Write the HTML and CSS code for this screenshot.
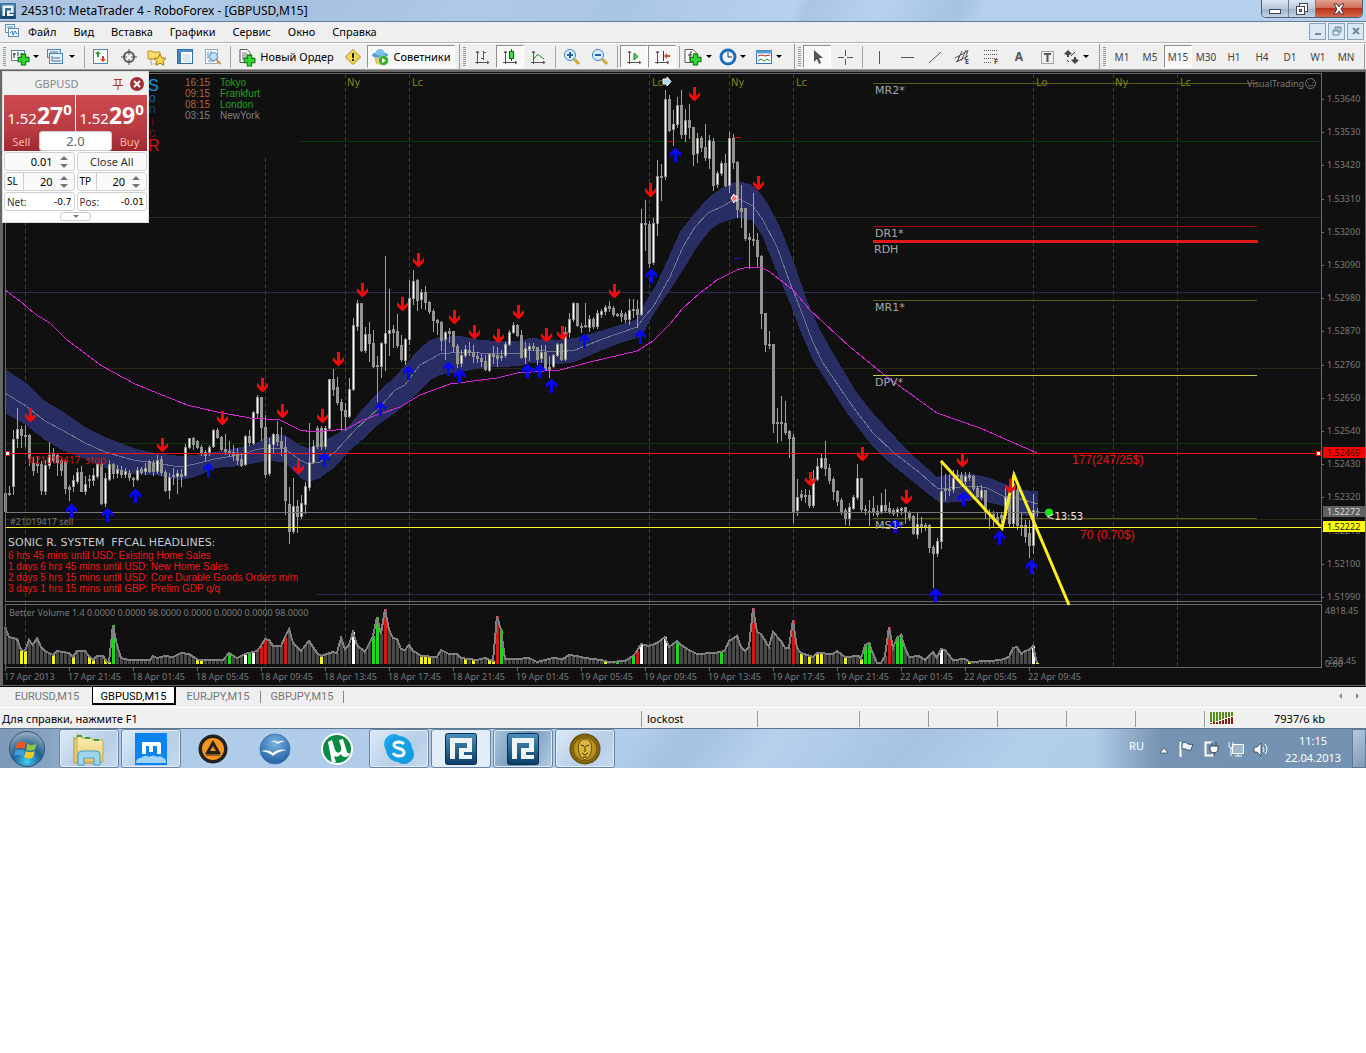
FILE: index.html
```html
<!DOCTYPE html>
<html lang="ru">
<head>
    <meta charset="UTF-8">
    <meta name="viewport" content="width=device-width, initial-scale=1.0">
    <title>245310: MetaTrader 4 - RoboForex - [GBPUSD,M15]</title>
    <link rel="stylesheet" href="styles.css">
</head>
<body>

    <!-- shared icons -->
    <svg class="defs" aria-hidden="true">
        <defs>
            <linearGradient id="gBlue" x1="0" y1="0" x2="0" y2="1"><stop offset="0" stop-color="#4a8fbd"/><stop offset="1" stop-color="#0b3d66"/></linearGradient>
            <radialGradient id="gOrb" cx=".5" cy=".85" r=".8"><stop offset="0" stop-color="#3fd0f5"/><stop offset=".5" stop-color="#1c5f93"/><stop offset="1" stop-color="#8fa9bd"/></radialGradient>
            <radialGradient id="gBird" cx=".5" cy=".3" r=".7"><stop offset="0" stop-color="#7db4e0"/><stop offset="1" stop-color="#1f5fa5"/></radialGradient>
            <radialGradient id="gGold"><stop offset="0" stop-color="#e8c84a"/><stop offset=".7" stop-color="#b08a1a"/><stop offset="1" stop-color="#5f4708"/></radialGradient>
            <linearGradient id="gFold" x1="0" y1="0" x2="0" y2="1"><stop offset="0" stop-color="#fdf3bb"/><stop offset="1" stop-color="#e6c667"/></linearGradient>
            <symbol id="robo" viewBox="0 0 32 32">
                <rect x=".5" y=".5" width="31" height="31" rx="2" fill="url(#gBlue)" stroke="#0a2f52"/>
                <path d="M5 5h22v14h-5v-9H10v16H5z" fill="#eef4f8"/>
                <path d="M14 15h13v4h-8v3h8v4H14z" fill="#eef4f8"/>
            </symbol>
            <symbol id="plus" viewBox="0 0 12 12"><path d="M4 1h4v3h3v4H8v3H4V8H1V4h3z" fill="#35d435" stroke="#0b7a0b"/></symbol>
            <symbol id="axes" viewBox="0 0 18 18"><path d="M4.500 3v13M2 14.500h14M3 5l1.500-2L6 5M14 13l2 1.500-2 1.500" fill="none" stroke="#555"/></symbol>
        </defs>
    </svg>

    <header class="titlebar">
        <svg class="app-icon" viewBox="0 0 32 32"><use href="#robo"/></svg>
        <h1>245310: MetaTrader 4 - RoboForex - [GBPUSD,M15]</h1>
        <div class="win-buttons">
            <button class="win-btn" aria-label="Свернуть"><svg width="14" height="12"><rect x="1.500" y="6.500" width="11" height="4" fill="#fff" stroke="#445"/></svg></button>
            <button class="win-btn" aria-label="Развернуть"><svg width="14" height="12"><rect x="4.500" y=".5" width="8" height="8" fill="#fff" stroke="#445"/><rect x="1.500" y="3.500" width="8" height="8" fill="#fff" stroke="#445"/><rect x="4.500" y="6.500" width="2" height="2" fill="#89a" stroke="#445"/></svg></button>
            <button class="win-btn close" aria-label="Закрыть"><svg width="14" height="12"><path d="M2 1h3l2 3 2-3h3L9 6l3 5H9L7 8l-2 3H2l3-5z" fill="#fff" stroke="#434"/></svg></button>
        </div>
    </header>

    <nav class="menubar">
        <svg width="16" height="16" class="menu-icon"><g fill="#f4f9fd" stroke="#5b8fc0"><rect x="1.500" y="1.500" width="9" height="8"/><rect x="4.500" y="5.500" width="10" height="8"/></g><path d="M6 10l2-2 1 4 2-4 2 3M3 4h6" fill="none" stroke="#3878b8"/></svg>
        <a href="#">Файл</a>
        <a href="#">Вид</a>
        <a href="#">Вставка</a>
        <a href="#">Графики</a>
        <a href="#">Сервис</a>
        <a href="#">Окно</a>
        <a href="#">Справка</a>
        <div class="mdi-buttons">
            <button aria-label="Свернуть окно"><svg width="12" height="12"><path d="M3 9h6" stroke="#6d8ba3" stroke-width="2"/></svg></button>
            <button aria-label="Восстановить окно"><svg width="12" height="12"><path d="M4 4V2h6v5H8M2 5h6v5H2zM2 6h6M4 3h6" fill="none" stroke="#6d8ba3"/></svg></button>
            <button aria-label="Закрыть окно"><svg width="12" height="12"><path d="M3 3l6 6M9 3l-6 6" stroke="#6d8ba3" stroke-width="2"/></svg></button>
        </div>
    </nav>

    <div class="toolbar">
        <div class="group">
            <button class="tool drop" aria-label="Новый график"><svg width="20" height="18"><rect x="1.500" y="2.500" width="13" height="10" fill="#f4f9fd" stroke="#4f86b8"/><path d="M4 5v5M3 6h3M8 4v4M10 6h3" stroke="#333" stroke-width="1"/><use href="#plus" x="7" y="5" width="13" height="13"/></svg></button>
            <button class="tool drop" aria-label="Профили"><svg width="20" height="18"><g fill="#e6f1fa" stroke="#4f86b8"><rect x="1.500" y="1.500" width="13" height="8"/><rect x="3.500" y="5.500" width="13" height="10"/></g><path d="M4 4h8M6 8v5h9M7 10h7" fill="none" stroke="#4f6f90"/></svg></button>
            <span class="sep"></span>
            <button class="tool" aria-label="Обзор рынка"><svg width="18" height="18"><rect x="1.500" y="1.500" width="14" height="14" fill="#fff" stroke="#4f86b8"/><path d="M6 3l3 3H7v3H5V6H3z" fill="#2a9d2a"/><path d="M11 14l-3-3h2V8h2v3h2z" fill="#e04020"/></svg></button>
            <button class="tool" aria-label="Окно данных"><svg width="18" height="18"><circle cx="9" cy="9" r="5" fill="none" stroke="#555" stroke-width="2"/><path d="M9 1v6M9 11v6M1 9h6M11 9h6" stroke="#555"/></svg></button>
            <button class="tool" aria-label="Навигатор"><svg width="20" height="18"><path d="M1 3h4l1 1h7v7H1z" fill="#f8dc6a" stroke="#b8902a"/><path d="M4 10v6h5" fill="none" stroke="#777" stroke-dasharray="1 1"/><path d="M13 6l2 4 4 .4-3 2.800.8 4-3.800-2-3.800 2 .8-4-3-2.800 4-.4z" fill="#ffd84a" stroke="#a87a10"/></svg></button>
            <button class="tool" aria-label="Терминал"><svg width="18" height="18"><rect x="1.500" y="1.500" width="15" height="14" fill="#fff" stroke="#2f6fae"/><path d="M2 3h14" stroke="#4f90cc" stroke-width="2"/><path d="M2 4h3v11H2z" fill="#3d82c4"/><path d="M7 7h8M7 9h8M7 11h8M7 13h8" stroke="#b9d2e8"/></svg></button>
            <button class="tool" aria-label="Тестер стратегий"><svg width="18" height="18"><rect x="1.500" y="1.500" width="12" height="14" fill="#f4f9fd" stroke="#9ab"/><path d="M4 4v7M7 3v8M10 5v5M4 13h7" stroke="#68a"/><circle cx="9.500" cy="8.500" r="4" fill="#bfe0f7" fill-opacity=".8" stroke="#5590bd"/><path d="M12.500 12l4 4" stroke="#c9953a" stroke-width="2"/></svg></button>
            <span class="sep"></span>
            <button class="tool order"><svg width="18" height="20"><path d="M2 2.500h7l3 3v10H2z" fill="#fff" stroke="#555"/><path d="M4 6h5M4 8h6M4 10h6M4 12h3" stroke="#777"/><use href="#plus" x="5" y="7" width="13" height="13"/></svg>Новый Ордер</button>
            <button class="tool" aria-label="Редактор"><svg width="18" height="18"><path d="M9 1.500L16.500 9 9 16.500 1.500 9z" fill="#f7d64a" stroke="#a8842a"/><path d="M9 5v5M9 11v2" stroke="#222" stroke-width="2"/></svg></button>
            <button class="tool experts pressed"><svg width="18" height="18"><path d="M3 8q6 5 12 0l1 5-5 4-6-1z" fill="#e8c25a"/><ellipse cx="9" cy="7" rx="8" ry="3" fill="#4a9fd4"/><path d="M4 6q1-5 5-5t5 5q-5 3-10 0z" fill="#7cc1ea"/><circle cx="12.500" cy="12.500" r="5" fill="#2fae2f" stroke="#fff" stroke-width=".5"/><path d="M11 10l4 2.500-4 2.500z" fill="#fff"/></svg>Советники</button>
        </div>
        <div class="group">
            <button class="tool" aria-label="Бары"><svg width="18" height="18"><use href="#axes"/><path d="M10.500 3v9M8 10.500h2M11 4.500h2" stroke="#178a17"/></svg></button>
            <button class="tool pressed" aria-label="Свечи"><svg width="18" height="18"><use href="#axes"/><path d="M10.500 1v12" stroke="#0d6b0d"/><rect x="8.500" y="3.500" width="4" height="7" fill="#3ee03e" stroke="#0d6b0d"/></svg></button>
            <button class="tool" aria-label="Линия"><svg width="18" height="18"><use href="#axes"/><path d="M4 12l4-5q2-1 3 1l4 3" fill="none" stroke="#178a17"/></svg></button>
            <span class="sep"></span>
            <button class="tool" aria-label="Увеличить"><svg width="18" height="18"><path d="M11 11l5 5" stroke="#d4a63a" stroke-width="3"/><circle cx="7" cy="7" r="5.500" fill="#d9eefc" stroke="#3a83c8" stroke-width="1"/><path d="M4 7h6M7 4v6" stroke="#2563a8" stroke-width="2"/></svg></button>
            <button class="tool" aria-label="Уменьшить"><svg width="18" height="18"><path d="M11 11l5 5" stroke="#d4a63a" stroke-width="3"/><circle cx="7" cy="7" r="5.500" fill="#d9eefc" stroke="#3a83c8" stroke-width="1"/><path d="M4 7h6" stroke="#2563a8" stroke-width="2"/></svg></button>
            <span class="sep"></span>
            <button class="tool pressed" aria-label="Автопрокрутка"><svg width="18" height="18"><use href="#axes"/><path d="M9 5l4 3.500L9 12z" fill="#5ad65a" stroke="#178a17"/></svg></button>
            <button class="tool pressed" aria-label="Сдвиг графика"><svg width="18" height="18"><use href="#axes"/><path d="M10.500 3v10" stroke="#333"/><path d="M11 8l3-3v2h3v2h-3v2z" fill="#d4502a"/></svg></button>
            <span class="sep"></span>
            <button class="tool drop" aria-label="Индикаторы"><svg width="20" height="18"><path d="M2 1.500h8l3 3v10H2z" fill="#fff" stroke="#555"/><path d="M9 4q-2-1-2 2v6M5 7h4" fill="none" stroke="#333"/><use href="#plus" x="6" y="5" width="13" height="13"/></svg></button>
            <button class="tool drop" aria-label="Периоды"><svg width="18" height="18"><circle cx="9" cy="9" r="7" fill="#eaf5fd" stroke="#1f6cb8" stroke-width="3"/><path d="M9 4v5h4" fill="none" stroke="#333"/></svg></button>
            <button class="tool drop" aria-label="Шаблоны"><svg width="18" height="18"><rect x="1.500" y="2.500" width="15" height="13" fill="#fff" stroke="#3577b5"/><path d="M1 4h16" stroke="#5d9bd6" stroke-width="3"/><path d="M3 8l4-1 3 1 5-1" fill="none" stroke="#b02020"/><path d="M3 13l3-2 3 2 3-2 3 2" fill="none" stroke="#178a4a"/></svg></button>
        </div>
        <div class="group">
            <button class="tool pressed" aria-label="Курсор"><svg width="18" height="18"><path d="M6 2v12l3-3 2 5 2-1-2-5h4z" fill="#555"/></svg></button>
            <button class="tool" aria-label="Перекрестие"><svg width="18" height="18"><path d="M9.500 2v6M9.500 11v6M2 9.500h6M11 9.500h6" stroke="#555"/></svg></button>
            <span class="sep"></span>
            <button class="tool" aria-label="Вертикальная линия"><svg width="18" height="18"><path d="M9.500 3v13" stroke="#555"/></svg></button>
            <button class="tool" aria-label="Горизонтальная линия"><svg width="18" height="18"><path d="M3 9.500h13" stroke="#555"/></svg></button>
            <button class="tool" aria-label="Трендовая линия"><svg width="18" height="18"><path d="M3 15L15 4" stroke="#555"/></svg></button>
            <button class="tool" aria-label="Канал"><svg width="18" height="20"><path d="M1 11L14 4M2 15l12-6M3 15L8 4M7 14l5-11M5 9l-1 6M11 13l3-10" stroke="#555"/><text x="11" y="17" class="mini">E</text></svg></button>
            <button class="tool" aria-label="Фибоначчи"><svg width="18" height="20"><path d="M2 3.500h14M2 7.500h14M2 11.500h14M2 15.500h8" stroke="#555" stroke-dasharray="1 1"/><text x="12" y="17" class="mini">F</text></svg></button>
            <button class="tool letter">A</button>
            <button class="tool" aria-label="Метка"><svg width="18" height="18"><rect x="3.500" y="3.500" width="12" height="12" fill="none" stroke="#555" stroke-dasharray="1 1"/><path d="M6 6h7M9.500 6v8" stroke="#555" stroke-width="2"/></svg></button>
            <button class="tool drop" aria-label="Стрелки"><svg width="18" height="18"><path d="M6 2l4 4-3 1v2H5V7L2 6zM13 16l-4-4 3-1V9h2v2l3 1z" fill="#444"/><path d="M5 12l2 2M9 8l4-4" fill="none" stroke="#444" stroke-width="1"/></svg></button>
        </div>
        <div class="group periods">
            <button class="tool">M1</button>
            <button class="tool">M5</button>
            <button class="tool pressed">M15</button>
            <button class="tool">M30</button>
            <button class="tool">H1</button>
            <button class="tool">H4</button>
            <button class="tool">D1</button>
            <button class="tool">W1</button>
            <button class="tool">MN</button>
        </div>
    </div>

    <main class="chart-window">
        <svg class="chart" viewBox="0 70 1366 616" role="img" aria-label="GBPUSD, M15">
            <rect x="3" y="72" width="1362" height="613" fill="#101010"/>
            <g id="levels" shape-rendering="crispEdges">
                <path d="M299 141.500H1321M5 443.500H1321" stroke="#0a3a0a"/>
                <path d="M5 217.500H1321M5 368.500H1321M5 519.500H1321" stroke="#2c2a1a"/>
                <path d="M5 292.500H1321M316 594.500H1321" stroke="#2a2a52"/>
                <path d="M873 83.500H1257M873 300.500H1257M873 518.500H1257" stroke="#5c5c14"/>
                <path d="M25.500 222V667M265.500 158V667M345.500 74V667M409.500 74V667M649.500 74V667M729.500 74V667M793.500 74V667M1033.500 74V667M1113.500 74V667M1177.500 74V667" stroke="#46460c" stroke-dasharray="4 3"/>
            </g>
            <g id="series" shape-rendering="crispEdges"></g>
            <g shape-rendering="crispEdges" fill="none">
                <path d="M873 226.500H1257" stroke="#a00c0c"/>
                <path d="M873 241.500H1258" stroke="#e01818" stroke-width="3"/>
                <path d="M873 375.500H1257" stroke="#c8c83c"/>
                <path d="M5 453.500H1321" stroke="#f01010"/>
                <path d="M5 512.500H1048" stroke="#777"/>
                <path d="M5 527.500H1321" stroke="#ffff30"/>
                <path d="M668 141.500h7M734 137.500h7" stroke="#c01010"/>
                <path d="M734 258.500h7" stroke="#1010c0"/>
                <path d="M5.500 73.500H1321.500V601.500H5.500zM5.500 604.500H1321.500V667.500H5.500z" stroke="#6a6a6a"/>
            </g>
            <rect x="5.500" y="451.500" width="4" height="4" fill="#fff" stroke="#e01010"/>
            <rect x="1316.500" y="451.500" width="4" height="4" fill="#fff" stroke="#e01010"/>
            <path d="M941 461L1002 528L1014 475L1069 605" fill="none" stroke="#ffee1c" stroke-width="3"/>
            <path d="M663 79h4v-2l4 4.500-4 4.500v-2h-4z" fill="#a8d8f0" stroke="#fff"/>
            <path d="M731 198l3-4v2h3v5h-3v2z" fill="#f07070" stroke="#fff"/>
            <circle cx="1049" cy="512.500" r="4" fill="#18e018"/>
            <g id="arrows"></g>

            <g class="session">
                <text x="347" y="86">Ny</text><text x="412" y="86">Lc</text><text x="652" y="86">Lo</text>
                <text x="731" y="86">Ny</text><text x="796" y="86">Lc</text><text x="1036" y="86">Lo</text>
                <text x="1115" y="86">Ny</text><text x="1180" y="86">Lc</text>
            </g>
            <g class="pivot">
                <text x="875" y="94">MR2*</text><text x="875" y="237">DR1*</text><text x="874" y="253">RDH</text>
                <text x="875" y="311">MR1*</text><text x="875" y="386">DPV*</text><text x="875" y="529">MS1*</text>
            </g>
            <g class="clock">
                <text x="185" y="86" fill="#a8683a">16:15</text><text x="220" y="86" fill="#22a022">Tokyo</text>
                <text x="185" y="97" fill="#a8683a">09:15</text><text x="220" y="97" fill="#22a022">Frankfurt</text>
                <text x="185" y="108" fill="#a8683a">08:15</text><text x="220" y="108" fill="#22a022">London</text>
                <text x="185" y="119" fill="#808080">03:15</text><text x="220" y="119" fill="#808080">NewYork</text>
            </g>
            <g class="sonic">
                <text x="148" y="91" class="big" fill="#1296e8">S</text>
                <text x="149" y="102" fill="#0c6cb0">o</text>
                <text x="149" y="113" fill="#0a4a7c">n</text>
                <text x="151" y="126" fill="#6e0c0c">i</text>
                <text x="149" y="137" fill="#8a0e0e">c</text>
                <text x="148" y="151" class="big" fill="#d01414">R</text>
            </g>
            <text x="28" y="464" class="order-red">#21019417 &#160;stop</text>
            <text x="10" y="525" class="dim">#21019417 sell</text>
            <text x="8" y="546" class="news-head">SONIC R. SYSTEM &#160;FFCAL HEADLINES:</text>
            <g class="news">
                <text x="8" y="559">6 hrs 45 mins until USD: Existing Home Sales</text>
                <text x="8" y="570">1 days 6 hrs 45 mins until USD: New Home Sales</text>
                <text x="8" y="581">2 days 5 hrs 15 mins until USD: Core Durable Goods Orders m/m</text>
                <text x="8" y="592">3 days 1 hrs 15 mins until GBP: Prelim GDP q/q</text>
            </g>
            <text x="1072" y="464" class="profit">177(247/25$)</text>
            <text x="1080" y="539" class="profit">70 (0.70$)</text>
            <text x="1046" y="520" class="timer">&lt;13:53</text>
            <text x="1247" y="87" class="dim brand">VisualTrading</text>
            <g fill="none" stroke="#777"><circle cx="1310.500" cy="83.500" r="5"/><path d="M1308 82v1M1313 82v1M1308 85q2.500 2.500 5 0"/></g>
            <text x="9" y="616" class="dim">Better Volume 1.4 0.0000 0.0000 98.0000 0.0000 0.0000 0.0000 98.0000</text>

            <g id="scale" class="dim"></g>
            <g class="dim">
                <text x="1325" y="614">4818.45</text>
                <text x="1325" y="664">-228.45</text>
                <text x="1325" y="667">0.00</text>
            </g>
            <g class="tags">
                <rect x="1323" y="447" width="42" height="11" fill="#f00"/><text x="1327" y="456" fill="#300">1.52469</text>
                <rect x="1323" y="506" width="42" height="11" fill="#606060"/><text x="1327" y="515" fill="#ddd">1.52272</text>
                <rect x="1323" y="521" width="42" height="11" fill="#ff0"/><text x="1327" y="530" fill="#222">1.52222</text>
            </g>
        </svg>

        <form class="trade-panel">
            <div class="tp-head">
                <span>GBPUSD</span>
                <button type="button" aria-label="Закрепить"><svg width="12" height="12"><path d="M2 1.500h8M4 2v5M8 2v5M1 7.500h10M6 8v4" fill="none" stroke="#a33" stroke-width="1"/></svg></button>
                <button type="button" aria-label="Закрыть панель"><svg width="16" height="16"><circle cx="8" cy="8" r="7" fill="#a03036"/><path d="M5 5l6 6M11 5l-6 6" stroke="#fff" stroke-width="2"/></svg></button>
            </div>
            <div class="tp-prices">
                <div class="price">1.52<b>27</b><sup>0</sup></div>
                <div class="price">1.52<b>29</b><sup>0</sup></div>
            </div>
            <div class="tp-deal">
                <button type="button">Sell</button>
                <input type="text" value="2.0" aria-label="Spread">
                <button type="button">Buy</button>
            </div>
            <div class="tp-grid">
                <div class="cell"><input type="text" value="0.01" aria-label="Lots"><i class="spin"></i></div>
                <button type="button" class="cell">Close All</button>
                <div class="cell"><label for="sl">SL</label><input type="text" id="sl" value="20"><i class="spin"></i></div>
                <div class="cell"><label for="tp">TP</label><input type="text" id="tp" value="20"><i class="spin"></i></div>
                <div class="cell wide"><span>Net:</span><output>-0.7</output></div>
                <div class="cell wide"><span>Pos:</span><output>-0.01</output></div>
            </div>
            <button type="button" class="tp-more" aria-label="Ещё"></button>
        </form>
    </main>

    <div class="tabs">
        <a href="#">EURUSD,M15</a>
        <a href="#" class="active">GBPUSD,M15</a>
        <a href="#">EURJPY,M15</a>
        <a href="#" class="ruled">GBPJPY,M15</a>
        <span class="tab-scroll"><svg width="28" height="10"><path d="M7 2v6L4 5zM21 2v6l3-3z" fill="#888"/></svg></span>
    </div>

    <footer class="statusbar">
        <span class="hint">Для справки, нажмите F1</span>
        <span class="s-user">lockost</span>
        <span class="s-wide"></span>
        <span></span>
        <span></span>
        <span></span>
        <span></span>
        <span></span>
        <span class="s-net">
            <svg width="24" height="14" shape-rendering="crispEdges"><path d="M1 1v10M4 1v10M7 1v9M10 1v8M13 1v7M16 1v6M19 1v5M22 1v4" stroke="#5a8a1a" stroke-width="2"/><path d="M1 12v1M4 11v2M7 11v2M10 10v3M13 9v4M16 8v5M19 7v6M22 6v7" stroke="#8a2010" stroke-width="2"/></svg>
            7937/6 kb
        </span>
    </footer>

    <div class="taskbar">
        <button class="start" aria-label="Пуск"><svg width="38" height="38"><circle cx="19" cy="19" r="17.500" fill="url(#gOrb)" stroke="#34546e"/><path d="M9 13q5-3 9 0l-1.500 6q-4-2-9 0z" fill="#e8562a"/><path d="M19.500 13.500q4 3 9 0l-1.500 6q-5 2.500-9 0z" fill="#8cc63e"/><path d="M7.300 20.500q5-2 9 0L15 26.500q-4-3-9-.5z" fill="#3fa0e0"/><path d="M17.800 21q4 2.500 9 0l-1.500 6q-5 3-9 0z" fill="#fcc82a"/></svg></button>
        <button class="task open" aria-label="Проводник"><svg width="36" height="34"><path d="M3 6h10l2 3h14v22H3z" fill="#e9d07a" stroke="#b5953a"/><path d="M6 3h4l1 3h10l1 2h10v22H6z" fill="url(#gFold)" stroke="#c9a94f"/><path d="M6 4h5M14 6h5M23 8h5" stroke="#3c9a4a" stroke-width="2"/><path d="M7 33V23q0-4 4-4h14q4 0 4 4v10h-6v-7H13v7z" fill="#9ed5ee" stroke="#4c9cc4"/></svg></button>
        <button class="task open" aria-label="Maxthon"><svg width="32" height="32"><rect width="32" height="32" fill="#0a84f0"/><path d="M1 30q0-5 5-5 4-4 8-1 4-3 8 0 4-2 6 1 3 0 3 5z" fill="#9fd3fa"/><path d="M7 21V9h17q2 0 2 2v10h-4v-8h-4v6h-4v-6h-3v8z" fill="#fff"/></svg></button>
        <button class="task" aria-label="AIMP"><svg width="32" height="32"><circle cx="16" cy="16" r="14.500" fill="#222"/><circle cx="16" cy="16" r="11" fill="#f7941d"/><path d="M16 7l8 14H8zM16 13l-3 5h6z" fill="#222" fill-rule="evenodd"/><path d="M9 22h14" stroke="#222" stroke-width="1"/></svg></button>
        <button class="task" aria-label="OpenOffice"><svg width="32" height="32"><circle cx="16" cy="16" r="15" fill="url(#gBird)" stroke="#3c78b4"/><path d="M12 8q4-1 7 1 3-2 7-1-5 1-7 3-2-2-7-3zM2 18q8-2 12 2 5-5 14-3-9 1-14 6-4-4-12-5z" fill="#fff"/></svg></button>
        <button class="task" aria-label="uTorrent"><svg width="32" height="32"><circle cx="16" cy="16" r="15" fill="#0b8a43" stroke="#fff" stroke-width="2"/><path d="M7 9l4-2 3 10q2 4 5 2 2-2 1-5l-2-7 4-1 4 13q1 2 3 1-1 4-5 4-3 0-4-3-3 4-7 2l2 6-4 1z" fill="#fff"/></svg></button>
        <button class="task open" aria-label="Skype"><svg width="32" height="32"><circle cx="11" cy="11" r="10" fill="#1ba7e8"/><circle cx="21" cy="21" r="10" fill="#0f9ade"/><circle cx="16" cy="16" r="13" fill="#14a0e6"/><path d="M21 11q-2-2-5-2-5 0-5 3 0 2 5 3.500 5 1 5 4 0 3.500-5 3.500-4 0-6-3" fill="none" stroke="#fff" stroke-width="3"/></svg></button>
        <button class="task open light" aria-label="MetaTrader"><svg width="32" height="32"><use href="#robo"/></svg></button>
        <button class="task open current" aria-label="MetaTrader GBPUSD"><svg width="32" height="32"><use href="#robo"/></svg></button>
        <button class="task open" aria-label="Lion"><svg width="32" height="32"><circle cx="16" cy="16" r="15.500" fill="url(#gGold)"/><circle cx="16" cy="16" r="12" fill="none" stroke="#705008"/><path d="M11 8q5-4 10 0 4 8-1 16l-4 3-4-3Q7 16 11 8z" fill="#d8b440" stroke="#6b4d0a"/><path d="M12 12l3 1M20 12l-3 1M16 13v6M13 20l3 2 3-2M14 24h4" fill="none" stroke="#4a3404" stroke-width="1"/></svg></button>

        <div class="tray">
            <span class="lang">RU</span>
            <svg width="12" height="20"><path d="M2 14l4-5 4 5z" fill="#fff" stroke="#567"/></svg>
            <svg width="18" height="20"><path d="M3.500 3v15" stroke="#fff" stroke-width="2"/><path d="M5 4q4-2 6 1 3 1 5 0l-2 6q-4 1-5-1H5z" fill="#eef" stroke="#456"/></svg>
            <svg width="18" height="20"><path d="M11 3.500H3.500v13h8M11 16.500v-2" fill="none" stroke="#fff" stroke-width="2"/><path d="M8 7h8v4q-1 3-4 3t-4-3zM10 3v4M14 3v4M12 13v4" fill="#fff" stroke="#345"/></svg>
            <svg width="18" height="20"><rect x="5.500" y="5.500" width="11" height="9" fill="#9fb6cc" stroke="#fff"/><path d="M8 17h7M11 15v2M2 3v4q0 2 2 2v8M6 3v4q0 2-2 2" fill="none" stroke="#fff" stroke-width="1"/></svg>
            <svg width="18" height="20"><path d="M2 8h3l4-4v13l-4-4H2z" fill="#fff" stroke="#456"/><path d="M11 8q2 2.500 0 5M13 5q4 5 0 10" fill="none" stroke="#fff"/></svg>
            <time class="clock-box">11:15<br>22.04.2013</time>
            <button class="peek" aria-label="Показать рабочий стол"></button>
        </div>
    </div>

    <script src="script.js"></script>
</body>
</html>
```

FILE: styles.css
```css
* {
    box-sizing: border-box;
}
body {
    margin: 0;
    background: #fff;
    color: #000;
    font-family: "Noto Sans", "Open Sans", sans-serif;
    font-size: 11px;
}
a {
    color: inherit;
    text-decoration: none;
}
button, input {
    font: inherit;
    color: inherit;
    margin: 0;
    padding: 0;
    border: 0;
    background: none;
}
.defs {
    position: absolute;
    width: 0;
    height: 0;
}

/* title bar */
.titlebar {
    display: flex;
    align-items: center;
    height: 22px;
    padding-right: 3px;
    border-bottom: 1px solid #5f7d9c;
    background: linear-gradient(115deg, #a8c0dc 0, #b4cfea 14%, #a4c0de 20%, #adc9e6 34%, #a9c6e4 46%, #b6d2ee 58%, #a9c5e3 59%, #b6d2ee 64%, #a5c3e1 70%, #b5d1ee 72%, #b5d1ee 100%);
}
.app-icon {
    width: 16px;
    height: 16px;
}
.titlebar h1 {
    flex: 1;
    margin: 0 0 0 5px;
    font-size: 12px;
    line-height: 20px;
    font-weight: normal;
}
.win-buttons {
    display: flex;
    align-self: flex-start;
    border: 1px solid #4e5f73;
    border-top: 0;
    border-radius: 0 0 5px 5px;
    overflow: hidden;
}
.win-btn {
    display: flex;
    align-items: center;
    justify-content: center;
    width: 27px;
    height: 17px;
    border-right: 1px solid #6f7f92;
    background: linear-gradient(#dbe6f2, #b9c9dc 50%, #9fb4cc 51%, #c0d3e6);
}
.win-btn.close {
    width: 46px;
    border-right: 0;
    background: linear-gradient(#e4a090, #d06a54 48%, #b8301a 50%, #d4694a);
}

/* menu */
.menubar {
    display: flex;
    align-items: center;
    gap: 17px;
    height: 21px;
    padding: 0 2px 2px 4px;
    background: #efefef;
    border-bottom: 1px solid #b4b4b4;
}
.menu-icon {
    margin-right: -9px;
}
.mdi-buttons {
    display: flex;
    gap: 2px;
    margin-left: auto;
}
.mdi-buttons button {
    display: flex;
    align-items: center;
    justify-content: center;
    width: 17px;
    height: 17px;
    border: 1px solid #8ba3b8;
    background: #dbe8f3;
}

/* toolbar */
.toolbar {
    display: flex;
    height: 27px;
    background: #efefef;
    border-top: 1px solid #fff;
    border-bottom: 1px solid #999;
}
.group {
    display: flex;
    align-items: center;
    padding: 0 4px 0 8px;
    border-right: 1px solid #999;
}
.group::before {
    content: "";
    align-self: center;
    width: 3px;
    height: 19px;
    margin: 0 2px 0 -5px;
    background: repeating-linear-gradient(#999 0 1px, transparent 1px 2px);
}
.group:first-child::before {
    margin-right: 3px;
}
.group:nth-child(3) {
    padding-right: 2px;
}
.sep {
    width: 1px;
    height: 22px;
    margin: 0 2px 0 3px;
    background: #a5a5a5;
}
.tool {
    display: flex;
    align-items: center;
    justify-content: center;
    width: 28px;
    height: 23px;
    border: 1px solid transparent;
}
.tool.pressed {
    background: #f8f8f8;
    border-color: #8f8f8f #fff #fff #8f8f8f;
}
.tool.drop {
    width: 36px;
    justify-content: flex-start;
    gap: 3px;
}
.tool.drop::after {
    content: "";
    border: 3px solid transparent;
    border-top: 3px solid #000;
    border-bottom: 0;
}
.tool.order {
    width: 106px;
    gap: 4px;
}
.tool.experts {
    width: 88px;
    gap: 4px;
}
.tool.letter {
    font-size: 12px;
    font-weight: bold;
    color: #555;
}
.mini {
    font: bold 7px "Noto Sans", sans-serif;
    fill: #444;
}
.periods {
    font-size: 10px;
    color: #444;
}

/* chart */
.chart-window {
    position: relative;
    background: #666;
}
.chart {
    display: block;
    width: 100%;
    height: auto;
}
.chart text {
    font-family: "Noto Sans", "Open Sans", sans-serif;
    font-size: 9px;
}
.chart .session text {
    font-family: "DejaVu Sans", sans-serif;
    font-size: 10px;
    fill: #80801a;
}
.chart .pivot text {
    font-family: "DejaVu Sans", sans-serif;
    font-size: 11px;
    fill: #a8a8a8;
}
.chart .clock text,
.chart .news text {
    font-family: "Liberation Sans", Arial, sans-serif;
    font-size: 10px;
}
.chart .news text {
    fill: #f01414;
}
.chart .news-head {
    font-family: "DejaVu Sans", sans-serif;
    font-size: 11px;
    fill: #c8c8c8;
}
.chart .sonic text {
    font-family: "Liberation Sans", Arial, sans-serif;
    font-size: 12px;
}
.chart .sonic .big {
    font-size: 16px;
}
.chart .dim {
    fill: #7a7a7a;
}
.chart .order-red {
    font-size: 10px;
    fill: #d01414;
}
.chart .profit {
    font-family: "Liberation Sans", Arial, sans-serif;
    font-size: 12px;
    fill: #e01414;
}
.chart .timer {
    font-family: "DejaVu Sans", sans-serif;
    font-size: 10px;
    fill: #e8e8e8;
}

/* one click trading panel */
.trade-panel {
    position: absolute;
    left: 2px;
    top: 1px;
    width: 147px;
    padding: 0 1px;
    background: #fff;
    border: 1px solid #ddd;
    color: #333;
}
.tp-head {
    display: flex;
    align-items: center;
    gap: 5px;
    height: 23px;
    margin: 0 -1px;
    padding-right: 3px;
    background: #f0f0f0;
    color: #888;
}
.tp-head span {
    flex: 1;
    padding-left: 3px;
    text-align: center;
}
.tp-head button {
    display: flex;
}
.tp-prices {
    display: grid;
    grid-template-columns: 1fr 1fr;
    gap: 1px;
}
.price {
    height: 36px;
    background: linear-gradient(#cf4a50, #b83a42);
    color: #fff;
    font-size: 15px;
    line-height: 40px;
    text-align: center;
    white-space: nowrap;
    overflow: hidden;
}
.price b {
    font-size: 23px;
}
.price sup {
    font-size: 15px;
    font-weight: bold;
    line-height: 0;
    vertical-align: 9px;
}
.tp-deal {
    display: grid;
    grid-template-columns: 35px 1fr 35px;
    height: 20px;
    background: linear-gradient(#b83a42, #a02830);
    color: #ffb0b0;
}
.tp-deal input {
    width: 100%;
    background: #fff;
    border: 1px solid #ccc;
    border-radius: 3px;
    color: #666;
    font-size: 13px;
    text-align: center;
}
.tp-grid {
    display: grid;
    grid-template-columns: 1fr 1fr;
    gap: 1px 2px;
    padding-top: 1px;
}
.cell {
    display: flex;
    align-items: center;
    justify-content: center;
    height: 19px;
    min-width: 0;
    padding: 0 2px;
    border: 1px solid #d0d0d0;
    border-radius: 3px;
    background: #fafafa;
}
.cell label {
    width: 17px;
    border-right: 1px solid #d0d0d0;
    font-size: 10px;
    line-height: 17px;
    color: #000;
}
.cell input {
    flex: 1;
    min-width: 0;
    padding-right: 7px;
    text-align: right;
    color: #000;
}
.cell.wide {
    justify-content: space-between;
    font-size: 10px;
    background: #fff;
}
.cell output {
    font-family: "DejaVu Sans", sans-serif;
    font-size: 9px;
    color: #000;
}
.spin {
    display: flex;
    flex-direction: column;
    gap: 4px;
    padding-right: 4px;
}
.spin::before,
.spin::after {
    content: "";
    border: 4px solid transparent;
    border-top: 0;
    border-bottom: 4px solid #777;
}
.spin::after {
    border-top: 4px solid #777;
    border-bottom: 0;
}
.tp-more {
    display: flex;
    justify-content: center;
    align-items: center;
    width: 31px;
    height: 9px;
    margin: 1px auto 1px;
    border: 1px solid #ccc;
    border-radius: 3px;
}
.tp-more::after {
    content: "";
    border: 3px solid transparent;
    border-top: 3px solid #777;
    border-bottom: 0;
}

/* chart tabs */
.tabs {
    display: flex;
    align-items: stretch;
    height: 22px;
    padding: 0 3px 2px 2px;
    background: #efefef;
    border-top: 1px solid #000;
    border-bottom: 1px solid #fff;
    color: #777;
    font-family: Roboto, "Noto Sans", sans-serif;
    font-size: 11px;
    line-height: 19px;
}
.tabs a {
    width: 84px;
    text-align: center;
    white-space: nowrap;
}
.tabs a:first-child {
    width: 90px;
}
.tabs .active {
    background: #fff;
    border: 1px solid #000;
    border-width: 0 2px 2px 1px;
    color: #000;
}
.tabs .ruled {
    height: 12px;
    margin-top: 4px;
    border: 1px solid #888;
    border-width: 0 1px;
    line-height: 11px;
}
.tab-scroll {
    display: flex;
    align-items: center;
    margin-left: auto;
}

/* status bar */
.statusbar {
    display: flex;
    align-items: center;
    height: 21px;
    padding-top: 1px;
    background: #f0f0f0;
    border-bottom: 1px solid #5d7690;
}
.statusbar span {
    width: 69px;
    height: 16px;
    padding-left: 5px;
    border-left: 1px solid #999;
    line-height: 16px;
}
.statusbar .hint {
    flex: 1;
    padding-left: 2px;
    border: 0;
}
.statusbar .s-user {
    width: 116px;
}
.statusbar .s-wide {
    width: 102px;
}
.statusbar .s-net {
    display: flex;
    gap: 40px;
    width: 162px;
}

/* taskbar */
.taskbar {
    display: flex;
    align-items: stretch;
    gap: 2px;
    height: 39px;
    background: linear-gradient(90deg, rgba(60, 90, 125, 0.45) 0, rgba(60, 90, 125, 0.35) 50px, rgba(60, 90, 125, 0) 120px, rgba(60, 90, 125, 0) 80%, rgba(60, 90, 125, 0.5) 85%, rgba(60, 90, 125, 0.5) 100%), linear-gradient(130deg, #b0cbe8 0, #b0cdea 46%, #a3c1e0 50%, #b5d1ec 56%, #a6c4e2 66%, #b2cfea 74%, #abc8e4 100%);
}
.start {
    display: flex;
    justify-content: center;
    align-items: center;
    width: 57px;
    padding-right: 3px;
}
.task {
    display: flex;
    justify-content: center;
    align-items: center;
    width: 60px;
    border: 1px solid transparent;
    border-radius: 3px;
}
.task.open {
    border-color: #6884a2;
    background: linear-gradient(135deg, #dce9f6, #b7cee6 60%, #c6daee);
    box-shadow: inset 0 0 0 1px #e0ecf8;
}
.task.light {
    background: #e2edf8;
}
.task.current {
    background: linear-gradient(110deg, #a9c3dc, #6f95b8 50%, #b5cde3);
}
.tray {
    display: flex;
    align-items: center;
    gap: 7px;
    margin-left: auto;
    color: #fff;
}
.lang {
    margin-right: 7px;
    padding-bottom: 6px;
}
.clock-box {
    width: 64px;
    margin-left: 4px;
    font-size: 11px;
    line-height: 17px;
    text-align: center;
}
.peek {
    align-self: stretch;
    width: 14px;
    border: 1px solid #5f7a96;
    background: linear-gradient(135deg, #b6c8da, #7f9ab6);
}
```

FILE: script.js
```javascript
// one bar every 4px: high, body top, body bottom, low (screen y), "+" marks a rising bar
const bars = `493 493 511 511+,486 493 494 495,430 439 486 494+,408 429 438 447+,426 429 435 447,425 435 436 446,434 435 458 465,457 463 470 475,457 464 465 472,461 464 490 494,
460 465 491 494+,442 455 465 468+,448 453 460 462,453 455 462 475,458 460 470 475,460 462 488 493,485 487 489 500,475 480 486 491+,468 472 481 483+,466 472 491 491,
476 484 491 494+,475 479 480 487,468 475 480 485+,463 464 476 478+,462 464 503 504,473 478 503 506+,460 464 479 480+,463 464 473 478,465 469 473 477+,466 470 474 477,
468 471 474 477+,470 473 477 480,477 478 479 486,467 470 479 480+,467 469 472 474,463 468 471 474+,460 461 471 472,460 463 471 475,455 460 471 473+,456 459 472 475,
470 472 490 491,473 477 490 498+,468 475 476 484,470 473 476 493+,469 474 476 486,444 447 475 476+,438 438 447 448+,437 438 444 449,440 441 447 448,445 447 452 455,
450 452 455 460,445 447 452 455+,429 430 446 447+,428 430 437 438,436 437 449 450,434 449 451 454,441 451 453 456,445 452 455 460,448 454 460 464,454 459 465 466,
435 436 464 465+,430 436 442 445,411 412 443 444+,395 397 413 418+,397 397 427 440,415 427 474 477,438 444 473 475+,433 434 444 453+,421 434 441 445,427 441 447 455,
437 447 500 514,487 504 531 543,478 506 531 533+,500 506 516 532,495 503 516 518+,482 486 504 513+,423 462 487 490+,440 446 462 463+,426 428 446 448,426 428 446 449,
426 428 446 448+,379 379 428 429+,369 379 389 395,377 387 402 404,399 402 410 430,403 410 416 430,378 389 416 417+,318 325 389 390+,300 303 326 330+,303 303 350 351,
327 334 350 352+,322 334 343 361,330 343 366 367,356 365 366 401,342 343 366 377+,256 333 343 370+,289 330 333 355+,325 329 332 347,314 331 345 347,335 345 359 361,
338 339 360 364+,280 298 339 344+,270 281 298 304+,279 280 300 310,289 292 299 308+,286 292 302 309,301 302 311 313,309 311 320 331,319 320 322 334,321 322 340 350,
331 332 339 359+,328 331 333 342,331 331 346 351,344 346 363 367,350 355 363 366+,345 349 355 357+,342 350 352 355,345 352 356 362,352 356 358 362,354 358 361 366,
355 361 369 370,353 354 370 371+,346 354 356 363,347 355 358 366,350 356 357 360,342 344 355 357+,330 332 344 345+,322 325 332 333+,324 325 335 336,330 335 357 358,
342 348 357 363+,343 346 349 360+,343 346 348 350,347 347 359 364,345 352 358 362+,345 352 369 370,356 367 369 377,354 355 366 367+,343 344 355 356+,343 344 359 360,
327 332 359 360+,313 319 332 337+,302 303 319 321+,303 303 325 326,323 326 327 332,303 325 326 327,315 319 327 331+,317 319 326 328,310 313 326 328+,309 311 314 317+,
305 307 311 314+,301 306 308 311,306 308 314 316,313 314 315 316,310 313 316 321,312 314 319 322,299 310 319 324+,299 309 310 317,300 309 314 327,209 223 314 315+,
200 223 224 250,221 224 263 267,218 223 262 264+,160 176 223 235+,164 176 177 200,90 99 176 179+,95 99 130 131,110 124 129 145+,97 105 124 127+,90 105 134 138,
109 120 134 141+,104 120 127 138,127 127 154 165,133 138 153 162+,136 138 147 151,124 147 157 160,135 140 158 168+,138 141 185 190,171 173 184 187+,161 163 173 175+,
154 163 185 186,132 138 185 192+,134 138 162 168,161 162 209 217,185 208 211 227,208 208 238 240,233 237 239 268,193 239 240 245,233 240 256 267,255 256 313 328,
313 313 344 351,331 344 345 348,344 344 423 432,408 422 423 442,396 422 423 440,401 423 432 434,430 431 438 457,434 437 511 522,479 497 510 515+,490 494 497 500,
489 495 496 502,490 495 505 507,470 479 505 507+,458 466 479 480+,453 458 467 468+,441 458 468 475,464 468 480 483,477 479 491 499,490 491 501 505,498 500 511 514,
508 510 518 524,503 507 518 525+,495 497 508 509+,464 478 497 499+,478 478 509 511,505 509 510 514,500 511 512 525,496 508 512 515,505 511 514 516,493 505 511 513+,
489 505 510 512,502 508 511 513,508 510 513 515,507 509 512 516+,507 508 510 514+,507 507 512 523,511 512 517 520,515 516 533 534,512 524 534 538+,517 524 526 532,
523 525 526 530,524 525 547 552,545 547 553 587,538 541 553 556+,460 491 541 548+,474 489 490 500,474 489 490 495,470 478 489 492+,470 475 476 480,472 475 481 483,
472 476 481 484+,472 475 477 480,475 476 488 490,486 488 496 497,485 490 497 499+,490 490 512 518,509 512 514 528,511 514 519 526,513 517 522 523,512 515 517 522,
488 497 515 517+,490 497 523 527,477 483 523 527+,480 490 525 529,512 525 526 535,520 525 536 542,520 533 545 557,494 510 545 553+,508 511 512 515`.split(',');

const bandTop = '5,369 26,383 45,401 62,411 85,427 105,437 133,448 155,453 180,456 195,455 215,452 240,447 255,444 265,437 285,435 300,445 308,448 320,443 340,432 350,425 360,412 380,390 395,377 405,365 420,348 430,340 440,337 460,336 480,340 500,341 520,341 530,338 560,340 575,338 600,331 620,325 637,319 645,303 655,287 663,270 680,232 693,215 710,196 725,186 738,181 750,184 758,190 768,204 780,227 793,260 808,303 820,330 837,360 857,393 873,413 907,450 937,477 953,474 973,474 990,478 1007,485 1020,490 1038,491';
const bandLow = '5,413 26,425 45,440 62,450 85,459 105,468 133,474 155,475 180,480 195,477 215,468 240,466 255,463 265,461 285,462 300,478 308,482 320,478 335,467 350,450 362,440 375,427 395,413 405,405 413,398 430,380 440,375 460,372 480,368 500,367 520,366 530,363 560,364 575,362 600,351 620,343 637,338 645,330 655,312 672,287 683,270 697,247 710,230 720,223 737,218 752,220 763,237 768,250 780,280 790,303 800,330 813,360 830,387 847,413 873,447 890,463 907,477 927,493 940,503 960,502 973,500 987,502 1007,507 1023,515 1038,518';
const bandMid = '5,393 26,406 45,421 62,430 85,443 105,452 133,460 155,463 180,467 195,464 215,459 240,455 255,450 265,448 285,449 300,460 308,464 320,462 335,452 355,430 380,407 395,390 405,385 420,365 440,354 460,352 480,353 500,353 520,353 530,350 560,352 575,350 600,340 620,333 637,327 645,316 653,307 670,277 683,247 695,227 708,213 723,206 737,198 753,206 763,220 777,247 790,283 800,308 812,340 823,363 853,407 873,433 893,452 920,473 938,489 960,487 975,486 987,488 1003,496 1017,498 1038,504';
const slowMa = '5,290 20,301 35,314 50,323 67,340 102,366 135,384 187,405 217,412 250,418 280,420 300,430 313,432 347,429 363,420 400,407 420,395 450,384 497,378 517,373 560,370 590,362 637,351 653,341 670,324 683,308 700,293 717,280 737,270 747,267 760,267 770,272 793,290 810,310 850,347 887,377 937,413 980,428 1037,453';
const volume = '5,627 9,637 17,639 21,650 25,651 29,640 33,645 37,638 41,647 45,651 53,655 57,651 69,653 73,657 77,651 85,651 89,656 93,660 97,656 103,656 107,662 109,662 113,625 117,645 121,658 129,660 150,660 153,656 157,658 165,656 173,657 181,653 189,654 195,658 199,660 223,660 229,653 237,658 245,654 253,652 257,651 261,646 265,639 269,640 273,646 281,646 285,637 289,629 293,643 301,651 309,641 317,653 321,656 333,652 337,653 341,638 345,649 349,645 353,632 357,645 365,652 373,636 377,617 381,634 385,609 389,630 393,638 397,639 401,649 405,650 409,645 413,651 417,653 421,656 437,657 441,650 449,654 457,654 461,658 477,660 485,658 493,661 497,616 501,630 505,659 517,659 529,658 537,662 553,658 563,659 569,655 577,656 585,658 601,660 609,662 625,661 633,656 637,651 641,644 649,646 657,643 665,637 669,647 677,641 681,645 689,650 697,654 713,653 721,652 725,650 729,641 737,636 741,647 745,651 749,647 753,608 757,632 761,634 769,647 773,632 781,641 785,648 789,648 793,620 797,648 801,653 813,657 817,653 833,654 837,651 845,657 859,656 861,659 865,645 869,643 873,654 877,663 881,663 885,656 889,627 893,648 897,638 901,635 905,648 909,657 919,656 925,660 933,652 937,658 941,649 945,650 953,660 965,659 970,662 989,661 1001,660 1009,657 1013,648 1017,647 1021,654 1025,651 1029,650 1033,646 1037,663';
const volumeColors = {
    '#f4f41c': [21, 25, 53, 73, 89, 93, 105, 109, 197, 201, 321, 421, 425, 429, 465, 473, 489, 493, 605, 801, 809, 817, 821, 845, 861, 877, 969, 1037],
    '#18dc18': [113, 229, 249, 373, 377, 501, 617, 633, 677, 721, 865, 869, 897, 901],
    '#d81414': [261, 265, 285, 385, 497, 637, 753, 793, 889],
    '#ffffff': [245, 253, 353, 641, 665, 941, 1033]
};
const sells = [[30,415],[162,445],[222,418],[262,385],[282,411],[298,467],[322,416],[338,359],[362,290],[402,304],[418,260],[454,317],[474,332],[498,336],[518,312],[546,335],[562,333],[614,291],[650,190],[694,94],[758,183],[810,479],[862,454],[906,497],[962,460],[1010,486]];
const buys = [[72,511],[108,515],[136,496],[209,470],[325,460],[381,409],[409,373],[449,369],[460,376],[528,371],[540,371],[552,386],[585,341],[641,337],[652,276],[676,155],[896,526],[936,595],[964,499],[1000,538],[1032,567]];
const prices = ['1.53640','1.53530','1.53420','1.53310','1.53200','1.53090','1.52980','1.52870','1.52760','1.52650','1.52540','1.52430','1.52320','1.52210','1.52100','1.51990'];
const times = ['17 Apr 2013','17 Apr 21:45','18 Apr 01:45','18 Apr 05:45','18 Apr 09:45','18 Apr 13:45','18 Apr 17:45','18 Apr 21:45','19 Apr 01:45','19 Apr 05:45','19 Apr 09:45','19 Apr 13:45','19 Apr 17:45','19 Apr 21:45','22 Apr 01:45','22 Apr 05:45','22 Apr 09:45'];

const rect = (x, y, w, h, fill) => `<rect x="${x}" y="${y}" width="${w}" height="${h}" fill="${fill}"/>`;
const points = s => s.split(' ').map(p => p.split(',').map(Number));

function valueAt(list, x) {
    for (let i = 1; i < list.length; i++) {
        const [x0, y0] = list[i - 1];
        const [x1, y1] = list[i];
        if (x <= x1) return y0 + (y1 - y0) * (x - x0) / (x1 - x0);
    }
    return list[list.length - 1][1];
}

function drawSeries() {
    let out = `<polygon points="${bandTop} ${bandLow.split(' ').reverse().join(' ')}" fill="#282d64"/>`;
    out += `<polyline points="${bandMid}" fill="none" stroke="#6c7490"/>`;

    bars.forEach((bar, i) => {
        const x = 5 + 4 * i;
        const [high, top, bottom, low] = bar.replace('+', '').trim().split(' ').map(Number);
        out += rect(x, high, 1, low - high + 1, '#a0a0a0');
        out += rect(x - 1, top, 3, Math.max(1, bottom - top + 1), '#949494');
        if (bar.includes('+')) out += rect(x, top + 1, 1, Math.max(0, bottom - top - 1), '#ffffff');
    });
    out += `<polyline points="${slowMa}" fill="none" stroke="#d428d4"/>`;

    const vol = points(volume);
    for (let x = 5; x <= 1037; x += 4) {
        const y = Math.round(valueAt(vol, x));
        const color = Object.keys(volumeColors).find(c => volumeColors[c].includes(x)) || '#484848';
        out += rect(x - 1, y, 3, 664 - y, color);
    }
    out += `<polyline points="${volume}" fill="none" stroke="#808080" stroke-width="2"/>`;
    document.getElementById('series').innerHTML = out;
}

function drawArrows() {
    const shape = '-1,-7 2,-7 2,2 6,-2 6,2 1,7 0,7 -5,2 -5,-2 -1,2';
    let out = '';
    sells.forEach(([x, y]) => out += `<polygon points="${shape}" fill="#f80808" transform="translate(${x} ${y})"/>`);
    buys.forEach(([x, y]) => out += `<polygon points="${shape}" fill="#0808f8" transform="translate(${x} ${y}) rotate(180)"/>`);
    document.getElementById('arrows').innerHTML = out;
}

function drawScale() {
    let out = '';
    prices.forEach((p, i) => {
        const y = Math.round(99 + i * 33.2);
        out += rect(1322, y, 2, 1, '#6a6a6a') + `<text x="1327" y="${y + 3}">${p}</text>`;
    });
    times.forEach((t, i) => {
        out += rect(5 + i * 64, 668, 1, 3, '#6a6a6a') + `<text x="${4 + i * 64}" y="680">${t}</text>`;
    });
    document.getElementById('scale').innerHTML = out;
}

drawSeries();
drawArrows();
drawScale();
```
